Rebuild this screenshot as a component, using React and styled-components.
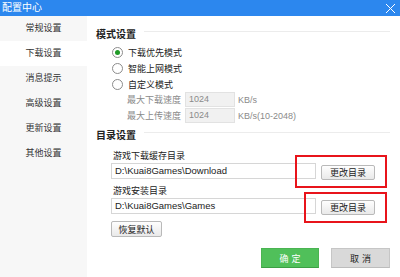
import React from 'react';
import styled, { createGlobalStyle } from 'styled-components';

const Global = createGlobalStyle`
    html, body {
        margin: 0;
        padding: 0;
        background: #fff;
    }
    body {
        font-family: "Liberation Sans", "Noto Sans CJK SC", sans-serif;
    }
`;

const Window = styled.div`
    width: 400px;
    height: 277px;
    display: flex;
    flex-direction: column;
    overflow: hidden;
    position: relative;
`;

const TitleBar = styled.div`
    height: 16px;
    flex: none;
    background: #2c87ee;
    color: #fff;
    display: flex;
    align-items: center;
    justify-content: space-between;
    padding: 0 4px 0 2px;
    font-size: 10px;
    line-height: 16px;
`;

const Close = styled.svg`
    width: 11px;
    height: 11px;
    display: block;
`;

const Body = styled.div`
    flex: 1;
    display: flex;
    min-height: 0;
`;

const Sidebar = styled.nav`
    width: 87px;
    flex: none;
    background: #f7f7f7;
`;

const NavItem = styled.div`
    height: 25px;
    line-height: 25px;
    text-align: center;
    font-size: 9px;
    color: #333;
    background: ${props => props.active ? '#fff' : 'transparent'};
`;

const Content = styled.main`
    flex: 1;
    padding: 10px 10px 0 9px;
    display: flex;
    flex-direction: column;
    position: relative;
`;

const Heading = styled.div`
    display: flex;
    align-items: center;
    gap: 8px;
    height: 14px;
    font-size: 10px;
    font-weight: bold;
    color: #222;
    margin-top: ${props => props.top || 0}px;
    &::after {
        content: '';
        flex: 1;
        height: 1px;
        background: #ececec;
        margin-top: -3px;
    }
`;

const Radios = styled.div`
    margin: 4px 0 0 16px;
`;

const RadioRow = styled.label`
    display: flex;
    align-items: center;
    height: 16px;
    gap: 5px;
    font-size: 9px;
    color: #222;
`;

const RadioDot = styled.span`
    width: 9px;
    height: 9px;
    border-radius: 50%;
    border: 1px solid #8c8c8c;
    background: #fff;
    display: flex;
    align-items: center;
    justify-content: center;
    &::after {
        content: '';
        width: 5px;
        height: 5px;
        border-radius: 50%;
        background: ${props => props.checked ? '#1f9a26' : 'transparent'};
    }
`;

const SpeedRow = styled.div`
    display: flex;
    align-items: center;
    height: 15px;
    margin-top: ${props => props.top || 0}px;
    font-size: 9px;
    color: #8a8a8a;
`;

const SpeedLabel = styled.span`
    width: 89px;
    text-align: right;
    padding-right: 4px;
    box-sizing: border-box;
`;

const SpeedInput = styled.div`
    width: 50px;
    height: 15px;
    box-sizing: border-box;
    background: #f1f1f1;
    border: 1px solid #e2e2e2;
    padding-left: 3px;
    line-height: 13px;
    font-size: 9px;
    color: #8a8a8a;
    margin-right: 3px;
`;

const DirLabel = styled.div`
    height: 14px;
    line-height: 14px;
    font-size: 9px;
    color: #222;
    margin: ${props => props.top}px 0 0 17px;
`;

const DirRow = styled.div`
    display: flex;
    align-items: flex-end;
    gap: 5px;
    margin-left: 15px;
    position: relative;
`;

const PathInput = styled.div`
    width: 205px;
    height: 16px;
    box-sizing: border-box;
    border: 1px solid #d6d6d6;
    background: #fff;
    padding-left: 3px;
    line-height: 14px;
    font-size: 9.5px;
    color: #222;
`;

const GreyButton = styled.button`
    width: ${props => props.w}px;
    height: ${props => props.h}px;
    padding: 0;
    box-sizing: border-box;
    border: 1px solid #b9b9b9;
    border-radius: 2px;
    background: linear-gradient(#fefefe, #e9e9e9);
    font-family: inherit;
    font-size: 9px;
    color: #222;
    margin-bottom: -1px;
`;

const RestoreButton = styled(GreyButton)`
    margin: 7px 0 0 15px;
    align-self: flex-start;
`;

const Highlight = styled.div`
    position: absolute;
    border: 2px solid #e8141b;
    pointer-events: none;
`;

const Footer = styled.div`
    display: flex;
    justify-content: flex-end;
    gap: 12px;
    margin-top: 11px;
`;

const ActionButton = styled.button`
    width: ${props => props.w}px;
    height: 20px;
    padding: 0;
    box-sizing: border-box;
    font-family: inherit;
    font-size: 9px;
    letter-spacing: 3px;
    text-indent: 3px;
    border: 1px solid ${props => props.primary ? '#4ab452' : '#c6c6c6'};
    border-bottom-color: ${props => props.primary ? '#3c9f44' : '#bcbcbc'};
    background: ${props => props.primary ? '#50c05a' : '#d9d9d9'};
    color: ${props => props.primary ? '#fff' : '#222'};
`;

const navItems = ['常规设置', '下载设置', '消息提示', '高级设置', '更新设置', '其他设置'];

export default function App() {
    return (
        <Window>
            <Global />
            <TitleBar>
                <span>配置中心</span>
                <Close viewBox="0 0 11 11">
                    <path d="M1 1 L10 10 M10 1 L1 10" stroke="#fff" strokeWidth="1" fill="none" />
                </Close>
            </TitleBar>
            <Body>
                <Sidebar>
                    {navItems.map((item, i) => (
                        <NavItem key={item} active={i === 1}>{item}</NavItem>
                    ))}
                </Sidebar>
                <Content>
                    <Heading>模式设置</Heading>
                    <Radios>
                        <RadioRow><RadioDot checked />下载优先模式</RadioRow>
                        <RadioRow><RadioDot />智能上网模式</RadioRow>
                        <RadioRow><RadioDot />自定义模式</RadioRow>
                    </Radios>
                    <SpeedRow>
                        <SpeedLabel>最大下载速度</SpeedLabel>
                        <SpeedInput>1024</SpeedInput>
                        KB/s
                    </SpeedRow>
                    <SpeedRow top={1}>
                        <SpeedLabel>最大上传速度</SpeedLabel>
                        <SpeedInput>1024</SpeedInput>
                        KB/s(10-2048)
                    </SpeedRow>
                    <Heading top={4}>目录设置</Heading>
                    <DirLabel top={8}>游戏下载缓存目录</DirLabel>
                    <DirRow>
                        <PathInput>D:\Kuai8Games\Download</PathInput>
                        <GreyButton w={54} h={15}>更改目录</GreyButton>
                        <Highlight style={{ left: 184, top: -8, width: 88, height: 29 }} />
                    </DirRow>
                    <DirLabel top={5}>游戏安装目录</DirLabel>
                    <DirRow>
                        <PathInput>D:\Kuai8Games\Games</PathInput>
                        <GreyButton w={54} h={15}>更改目录</GreyButton>
                        <Highlight style={{ left: 193, top: -6, width: 79, height: 27 }} />
                    </DirRow>
                    <RestoreButton w={51} h={16}>恢复默认</RestoreButton>
                    <Footer>
                        <ActionButton primary w={58}>确定</ActionButton>
                        <ActionButton w={59}>取消</ActionButton>
                    </Footer>
                </Content>
            </Body>
        </Window>
    );
}
